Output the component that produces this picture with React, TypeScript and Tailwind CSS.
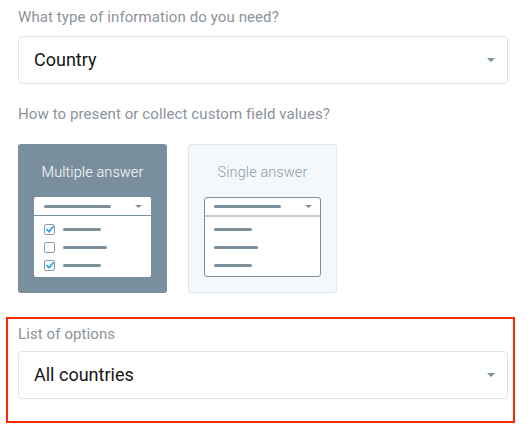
import React from 'react'

function Caret({ className = '' }: { className?: string }) {
  return (
    <svg width="8" height="4" viewBox="0 0 8 4" className={className}>
      <path d="M0 0h8L4 4z" fill="#7b8f9d" />
    </svg>
  )
}

function Select({ value }: { value: string }) {
  return (
    <div className="flex h-[48px] items-center justify-between rounded-[4px] border border-[#dfe3e7] bg-white pl-[15px] pr-[12px]">
      <span className="text-[18px] leading-none text-[#151515]">{value}</span>
      <Caret />
    </div>
  )
}

function Check({ on }: { on: boolean }) {
  return (
    <span className="flex h-[11px] w-[11px] items-center justify-center rounded-[2px] border border-[#8a9cab] bg-white">
      {on && (
        <svg width="8" height="7" viewBox="0 0 8 7">
          <path d="M1 3.6l2 2L7 1" fill="none" stroke="#2ea3f2" strokeWidth="1.8" strokeLinecap="round" />
        </svg>
      )}
    </span>
  )
}

function Line({ w }: { w: number }) {
  return <span className="block h-[3px] rounded-full bg-[#7b8f9d]" style={{ width: w }} />
}

function MiniDropdown({ checks }: { checks: boolean }) {
  const rows = [38, 44, 38]
  return (
    <div
      className={
        checks
          ? 'mx-auto h-[80px] w-[117px] rounded-[2px] bg-white'
          : 'mx-auto h-[80px] w-[117px] rounded-[3px] border border-[#7b8f9d] bg-white'
      }
    >
      <div
        className={
          checks
            ? 'flex h-[19px] items-center justify-between border-b border-[#7a8f9e] pl-[10px] pr-[9px]'
            : 'flex h-[19px] items-center justify-between border-b-2 border-[#c3ccd2] pl-[9px] pr-[8px]'
        }
      >
        <Line w={67} />
        <svg width="7" height="3" viewBox="0 0 7 3">
          <path d="M0 0h7L3.5 3z" fill="#7b8f9d" />
        </svg>
      </div>
      <div className={checks ? 'flex flex-col gap-[7px] pl-[10px] pt-[8px]' : 'flex flex-col gap-[15px] pl-[9px] pt-[11px]'}>
        {rows.map((w, i) => (
          <div key={i} className="flex items-center gap-[8px]">
            {checks && <Check on={i !== 1} />}
            <Line w={w} />
          </div>
        ))}
      </div>
    </div>
  )
}

export default function App() {
  return (
    <div className="h-[432px] w-[532px] bg-white font-['Roboto',sans-serif]">
      <div className="pl-[18px] pr-[24px] pt-[7px]">
        <p className="text-[15px] leading-[20px] tracking-[0.1px] text-[#8c929a]">What type of information do you need?</p>
        <div className="mt-[9px]">
          <Select value="Country" />
        </div>

        <p className="mt-[20px] text-[15px] leading-[20px] tracking-[0.1px] text-[#8c929a]">
          How to present or collect custom field values?
        </p>

        <div className="mt-[20px] flex gap-[21px]">
          <div className="h-[149px] w-[149px] rounded-[3px] bg-[#7a8f9e] pt-[19px]">
            <p className="text-center text-[14.5px] font-light leading-[20px] tracking-[0.1px] text-white">Multiple answer</p>
            <div className="mt-[14px]">
              <MiniDropdown checks />
            </div>
          </div>
          <div className="h-[149px] w-[149px] rounded-[3px] border border-[#e2e7eb] bg-[#f5f8fa] pt-[18px]">
            <p className="text-center text-[14.5px] font-light leading-[20px] tracking-[0.1px] text-[#8a9cab]">Single answer</p>
            <div className="mt-[14px]">
              <MiniDropdown checks={false} />
            </div>
          </div>
        </div>
      </div>

      <div className="ml-[6px] mt-[24px] w-[509px] border-2 border-[#ff2a00] pb-[22px] pl-[10px] pr-[5px] pt-[5px]">
        <p className="text-[15px] leading-[20px] tracking-[0.1px] text-[#8c929a]">List of options</p>
        <div className="mt-[7px]">
          <Select value="All countries" />
        </div>
      </div>
    </div>
  )
}
